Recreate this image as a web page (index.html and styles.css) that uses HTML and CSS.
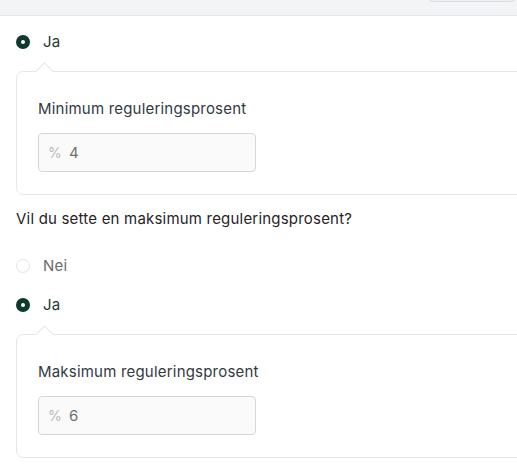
FILE: index.html
```html
<!DOCTYPE html>
<html lang="no">
<head>
<meta charset="utf-8">
<link rel="stylesheet" href="styles.css">
</head>
<body>
<div class="topbar"><div class="topbtn"></div></div>
<main class="content">
  <div class="option checked"><span class="radio"></span><span class="opt-label">Ja</span></div>
  <section class="card">
    <span class="notch"></span>
    <div class="field-label">Minimum reguleringsprosent</div>
    <div class="input"><span class="unit">%</span><span class="value">4</span></div>
  </section>
  <div class="question">Vil du sette en maksimum reguleringsprosent?</div>
  <div class="options">
    <div class="option"><span class="radio"></span><span class="opt-label">Nei</span></div>
    <div class="option checked"><span class="radio"></span><span class="opt-label">Ja</span></div>
  </div>
  <section class="card">
    <span class="notch"></span>
    <div class="field-label">Maksimum reguleringsprosent</div>
    <div class="input"><span class="unit">%</span><span class="value">6</span></div>
  </section>
</main>
</body>
</html>
```
FILE: styles.css
```css
html, body {
  margin: 0;
  padding: 0;
  overflow: hidden;
  background: #fff;
}
body {
  font-family: Inter, "Noto Sans", sans-serif;
  font-size: 15px;
  line-height: 20px;
  letter-spacing: 0.2px;
  color: #1f2328;
}
.topbar {
  height: 15px;
  background: #f3f4f6;
  border-bottom: 1px solid #e6e7ea;
  display: flex;
  justify-content: flex-end;
  overflow: hidden;
}
.topbtn {
  width: 88px;
  height: 30px;
  margin-top: -30px;
  border: 1px solid #d9dce6;
  border-radius: 6px;
  background: #eef0f5;
}
.content {
  padding: 16px 0 0 16px;
  display: flex;
  flex-direction: column;
}
.option {
  display: flex;
  align-items: center;
  height: 20px;
}
.radio {
  width: 14px;
  height: 14px;
  box-sizing: border-box;
  border-radius: 50%;
  border: 1px solid #e3e5e8;
  background: #fff;
  margin-right: 13px;
}
.option.checked .radio {
  border: 5px solid #0d3a2c;
  background: #fff;
}
.opt-label {
  color: #6b6b6b;
}
.option.checked .opt-label {
  color: #1c3b31;
}
.card {
  position: relative;
  margin-top: 19px;
  width: 560px;
  border: 1px solid #e6e7ea;
  border-radius: 7px;
  padding: 27px 21px 22px;
  background: #fff;
}
.notch {
  position: absolute;
  top: -7px;
  left: 21px;
  width: 12px;
  height: 12px;
  background: #fff;
  border-top: 1px solid #e6e7ea;
  border-left: 1px solid #e6e7ea;
  transform: rotate(45deg);
}
.field-label {
  color: #333a40;
}
.input {
  margin-top: 14px;
  width: 218px;
  height: 39px;
  box-sizing: border-box;
  border: 1px solid #d6d6d6;
  border-radius: 4px;
  background: #fafafa;
  display: flex;
  align-items: center;
  padding-left: 9px;
}
.unit {
  color: #b8b8b8;
  font-size: 14px;
  width: 21px;
}
.value {
  color: #707070;
}
.question {
  margin-top: 14px;
  color: #1f2328;
}
.options {
  margin-top: 27px;
  display: flex;
  flex-direction: column;
  gap: 19px;
}
```
